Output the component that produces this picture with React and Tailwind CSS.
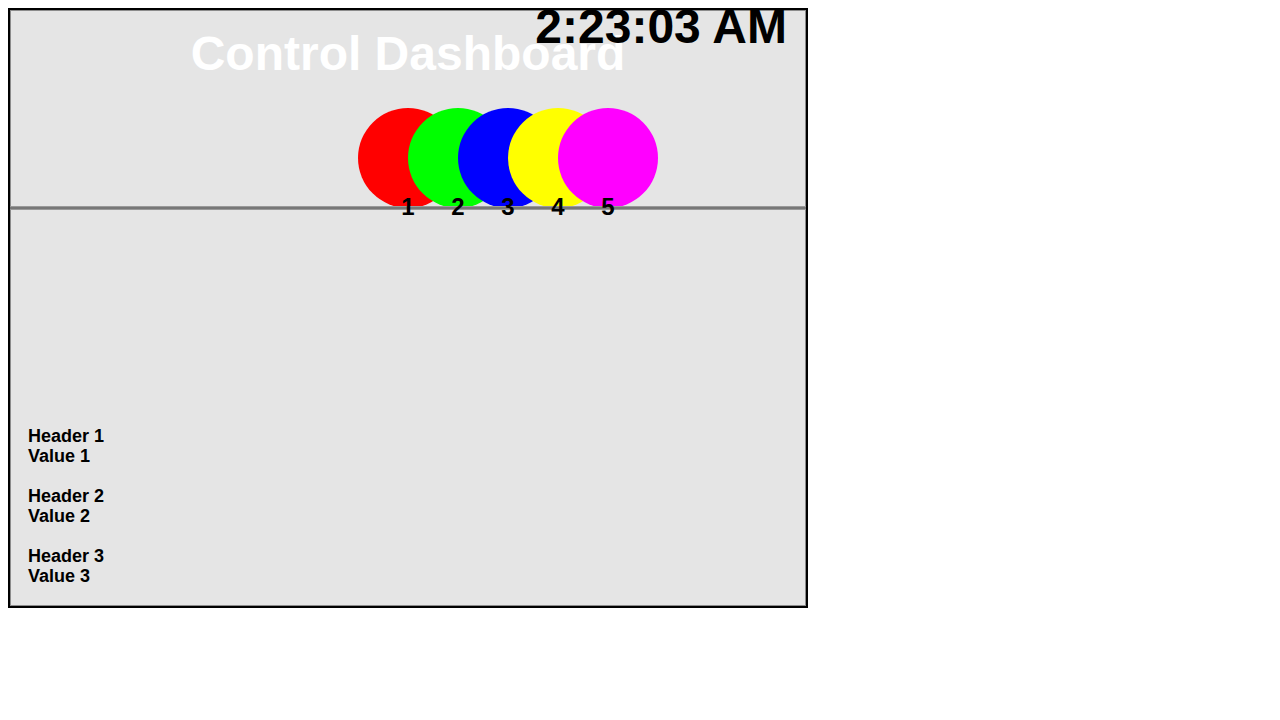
const LIGHTS = [
  { id: 1, color: 'bg-[#ff0000]' },
  { id: 2, color: 'bg-[#00ff00]' },
  { id: 3, color: 'bg-[#0000ff]' },
  { id: 4, color: 'bg-[#ffff00]' },
  { id: 5, color: 'bg-[#ff00ff]' },
];

const ROWS = [
  { header: 'Header 1', value: 'Value 1' },
  { header: 'Header 2', value: 'Value 2' },
  { header: 'Header 3', value: 'Value 3' },
];

const App = () => {
  return (
    <div className="p-2 font-['Liberation_Sans',Arial,sans-serif]">
      <div className="w-[800px] h-[600px] border-2 border-black">
        <div className="relative h-full flex flex-col bg-[#e5e5e5] border border-[#8c8c8c]">
          {/* Clock */}
          <div className="absolute top-[-8px] right-[18px] text-[48px] leading-none font-bold text-black z-30 whitespace-nowrap">
            2:23:03 AM
          </div>

          <h1 className="mt-[19px] text-center text-[48px] leading-none font-bold text-white">
            Control Dashboard
          </h1>

          {/* Lights */}
          <div className="relative flex mt-[30px] pl-[347px]">
            {LIGHTS.map((l, i) => (
              <div
                key={l.id}
                className={`relative w-[100px] h-[100px] shrink-0 rounded-full ${l.color} ${i > 0 ? '-ml-[50px]' : ''}`}
              >
                <span className="absolute left-0 right-0 top-[87px] text-center text-[24px] leading-none font-bold text-black z-20">
                  {l.id}
                </span>
              </div>
            ))}
          </div>
          <div className="relative z-10 -mt-[2px] -mx-px h-[4px] bg-[#777777] border-y border-[#999999]" />

          {/* Data list */}
          <div className="mt-auto pl-[17px] pb-[19px] flex flex-col gap-5 text-[18px] leading-[20px] font-bold text-black">
            {ROWS.map((r) => (
              <div key={r.header}>
                <div>{r.header}</div>
                <div>{r.value}</div>
              </div>
            ))}
          </div>
        </div>
      </div>
    </div>
  );
};

export default App;
